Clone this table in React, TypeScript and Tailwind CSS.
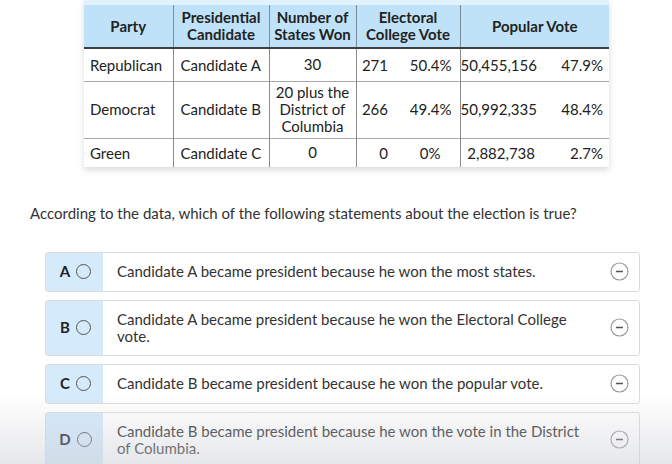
import React from "react";

const rows = [
  { party: "Republican", cand: "Candidate A", states: ["30"], ev: "271", evp: "50.4%", pv: "50,455,156", pvp: "47.9%", h: "h-[33px]" },
  { party: "Democrat", cand: "Candidate B", states: ["20 plus the", "District of", "Columbia"], ev: "266", evp: "49.4%", pv: "50,992,335", pvp: "48.4%", h: "h-[57px]" },
  { party: "Green", cand: "Candidate C", states: ["0"], ev: "0", evp: "0%", pv: "2,882,738", pvp: "2.7%", h: "h-[29px]", zero: true },
];

const options = [
  { key: "A", text: ["Candidate A became president because he won the most states."], h: "h-[40px]" },
  { key: "B", text: ["Candidate A became president because he won the Electoral College", "vote."], h: "h-[56px]" },
  { key: "C", text: ["Candidate B became president because he won the popular vote."], h: "h-[40px]" },
  { key: "D", text: ["Candidate B became president because he won the vote in the District", "of Columbia."], h: "h-[56px]" },
];

const MinusCircle = () => (
  <svg width="19" height="19" viewBox="0 0 19 19" fill="none">
    <circle cx="9.5" cy="9.5" r="8.5" stroke="#9a9a9a" strokeWidth="1.2" />
    <line x1="6" y1="9.5" x2="13" y2="9.5" stroke="#555" strokeWidth="1.6" />
  </svg>
);

export default function App() {
  return (
    <div className="relative w-[672px] h-[464px] overflow-hidden bg-white text-[#222]" style={{ fontFamily: "Lato, 'Liberation Sans', sans-serif" }}>
      <div className="pl-[84px]">
        <div className="w-[525px] shadow-[0_3px_6px_rgba(0,0,0,0.15)]">
          <div className="h-[5px] bg-[#e2f2fc]" />
          <table className="w-[525px] border-collapse table-fixed text-[15px]">
            <colgroup>
              <col className="w-[89px]" />
              <col className="w-[96px]" />
              <col className="w-[87px]" />
              <col className="w-[44px]" />
              <col className="w-[60px]" />
              <col className="w-[80px]" />
              <col className="w-[69px]" />
            </colgroup>
            <thead>
              <tr className="h-[43px] bg-[#bfe2f8] font-bold leading-[17px] text-center">
                <th className="border-r border-[#7a8a96]">Party</th>
                <th className="border-r border-[#7a8a96] whitespace-nowrap">Presidential<br />Candidate</th>
                <th className="border-r border-[#7a8a96] whitespace-nowrap">Number of<br />States Won</th>
                <th colSpan={2} className="border-r border-[#7a8a96] whitespace-nowrap">Electoral<br />College Vote</th>
                <th colSpan={2}>Popular Vote</th>
              </tr>
            </thead>
            <tbody className="border-t-[2px] border-[#3a3f44]">
              {rows.map((r, i) => (
                <tr key={i} className={`${r.h} ${i > 0 ? "border-t border-[#a8a8a8]" : ""}`}>
                  <td className="px-[6px] border-r border-[#8a8a8a] whitespace-nowrap">{r.party}</td>
                  <td className="px-[7px] border-r border-[#8a8a8a] whitespace-nowrap">{r.cand}</td>
                  <td className="text-center leading-[17px] border-r border-[#8a8a8a] whitespace-nowrap">
                    {r.states.map((s, j) => (
                      <div key={j}>{s}</div>
                    ))}
                  </td>
                  <td className="text-right pr-[12px]">{r.ev}</td>
                  <td className={`border-r border-[#8a8a8a] text-right ${r.zero ? "pr-[19px]" : "pr-[8px]"}`}>{r.evp}</td>
                  <td className="text-right pr-[5px] whitespace-nowrap">{r.pv}</td>
                  <td className="text-right pr-[6px]">{r.pvp}</td>
                </tr>
              ))}
            </tbody>
          </table>
        </div>
      </div>

      <p className="mt-[35px] pl-[30px] text-[15px] text-[#333]">
        According to the data, which of the following statements about the election is true?
      </p>

      <div className="mt-[27px] pl-[45px] flex flex-col gap-[8px]">
        {options.map((o) => (
          <div key={o.key} className={`${o.h} w-[595px] flex rounded-[3px] border border-[#dcdcdc] overflow-hidden`}>
            <div className="w-[57px] bg-[#d5eafb] flex items-center justify-center gap-[6px] pl-[2px]">
              <span className="font-bold text-[15px] text-[#222]">{o.key}</span>
              <span className="w-[15px] h-[15px] rounded-full border-[1.5px] border-[#555]" />
            </div>
            <div className="flex-1 flex items-center pl-[14px] text-[15px] text-[#333] leading-[17px]">
              <div>
                {o.text.map((t, j) => (
                  <div key={j}>{t}</div>
                ))}
              </div>
            </div>
            <div className="w-[40px] flex items-center justify-center">
              <MinusCircle />
            </div>
          </div>
        ))}
      </div>

      <div className="absolute left-0 right-0 bottom-0 h-[70px] pointer-events-none bg-gradient-to-b from-[rgba(210,212,218,0)] to-[rgba(205,207,214,0.5)]" />
    </div>
  );
}
